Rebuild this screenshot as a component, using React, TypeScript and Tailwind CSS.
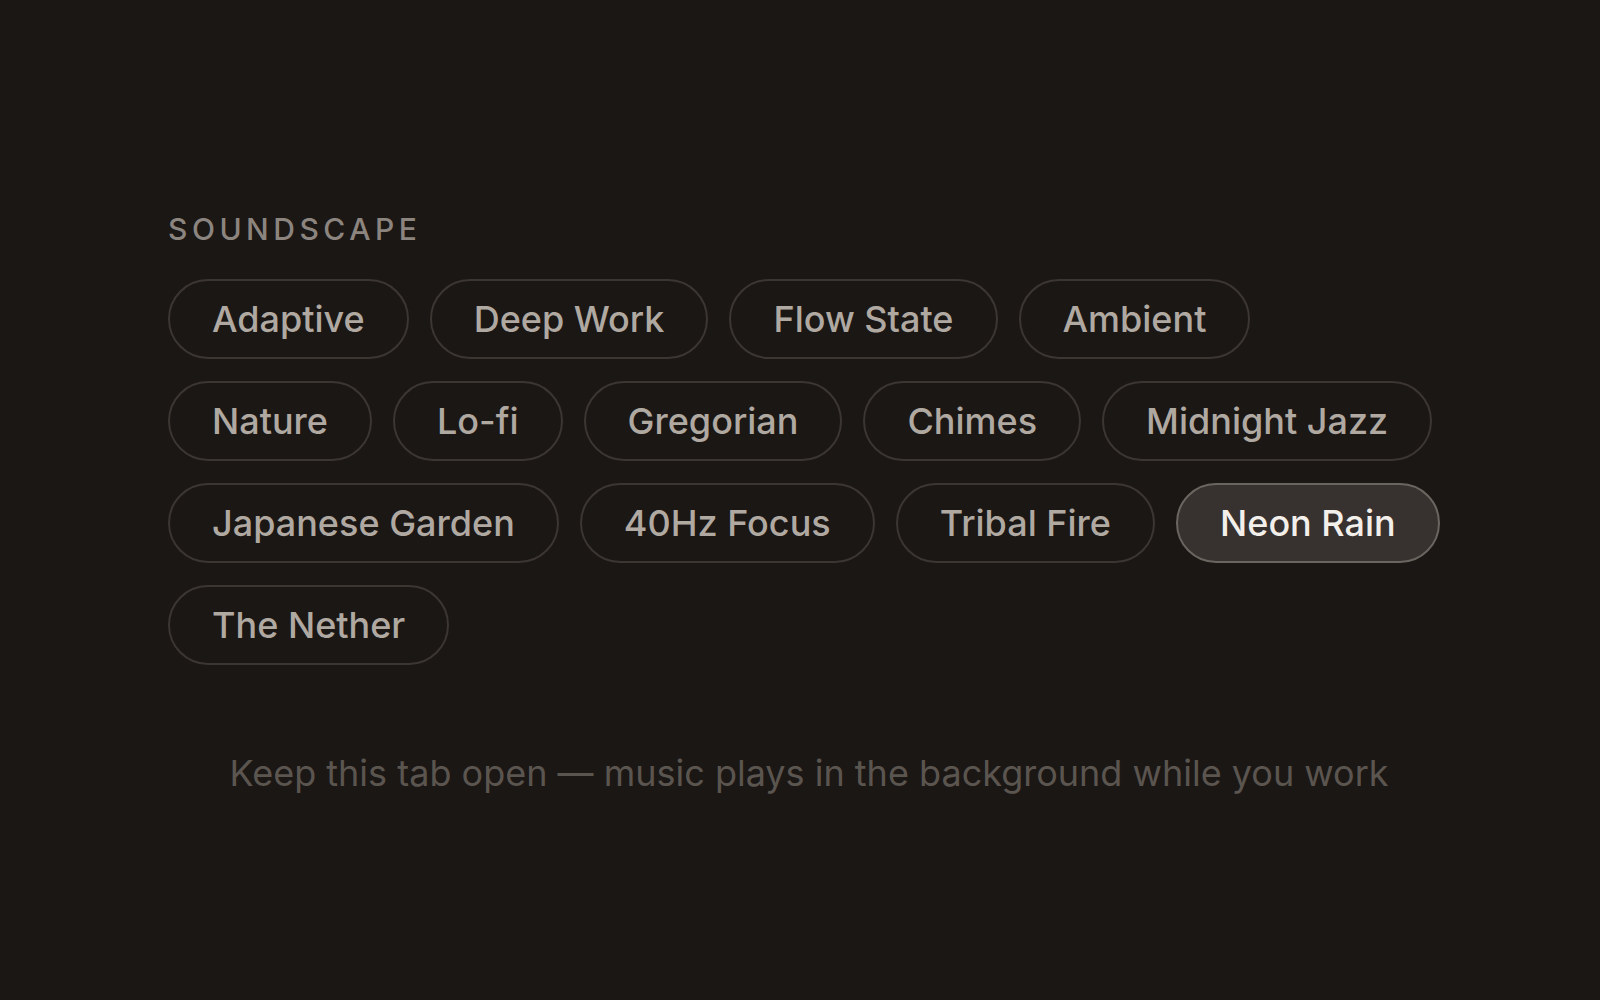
const soundscapes = [
  'Adaptive',
  'Deep Work',
  'Flow State',
  'Ambient',
  'Nature',
  'Lo-fi',
  'Gregorian',
  'Chimes',
  'Midnight Jazz',
  'Japanese Garden',
  '40Hz Focus',
  'Tribal Fire',
  'Neon Rain',
  'The Nether',
];

export default function App() {
  const active = 'Neon Rain';

  return (
    <div className="min-h-screen w-full bg-[#1b1715] font-['Inter','Liberation_Sans',sans-serif]">
      <div className="flex flex-col pl-[168px] pr-[150px] pt-[209px]">
        {/* Label */}
        <div className="text-[30px] font-medium uppercase leading-[40px] tracking-[0.15em] text-[#8c857f]">
          Soundscape
        </div>

        {/* Chips */}
        <div className="mt-[30px] flex flex-wrap gap-x-[21px] gap-y-[22px]">
          {soundscapes.map((name) => (
            <button
              key={name}
              className={
                name === active
                  ? 'flex h-[80px] items-center rounded-full border-2 border-[#6b6560] bg-[#37322f] px-[42px] text-[36px] font-medium text-[#f3efea]'
                  : 'flex h-[80px] items-center rounded-full border-2 border-[#3c3633] px-[42px] text-[36px] font-medium text-[#b0a9a2]'
              }
            >
              {name}
            </button>
          ))}
        </div>

        {/* Footer hint */}
        <p className="mt-[86px] text-center text-[36px] leading-[44px] text-[#5b5550]">
          Keep this tab open — music plays in the background while you work
        </p>
      </div>
    </div>
  );
}
